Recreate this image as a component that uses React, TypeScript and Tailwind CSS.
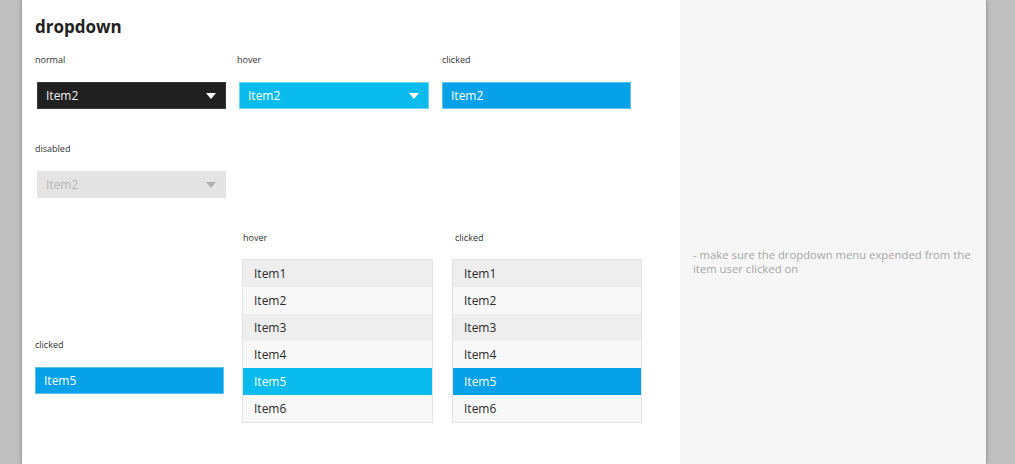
import React from 'react';

const font = { fontFamily: '"Open Sans", "Noto Sans", sans-serif' };

function Caret({ color }: { color: string }) {
  return (
    <svg width="10" height="6" viewBox="0 0 10 6" className="shrink-0">
      <path d="M0 0 L10 0 L5 6 Z" fill={color} />
    </svg>
  );
}

function Label({ children, className = '' }: { children: React.ReactNode; className?: string }) {
  return <div className={`text-[9px] leading-[12px] text-[#333] ${className}`}>{children}</div>;
}

const listItems = ['Item1', 'Item2', 'Item3', 'Item4', 'Item5', 'Item6'];

function ItemList({ active, width }: { active: string; width: string }) {
  return (
    <div className={`${width} border border-[#e3e3e3] flex flex-col`}>
      {listItems.map((item, idx) => {
        const isActive = item === 'Item5';
        const base = idx % 2 === 0 ? 'bg-[#eeeeee]' : 'bg-[#f8f8f8]';
        return (
          <div
            key={item}
            className={`h-[27px] pl-[11px] flex items-center text-[12px] ${
              isActive ? `${active} text-white` : `${base} text-[#2a2a2a]`
            }`}
          >
            {item}
          </div>
        );
      })}
    </div>
  );
}

export default function App() {
  return (
    <div className="w-[1015px] h-[464px] bg-[#bfbfbf] overflow-hidden" style={font}>
      <div className="ml-[22px] w-[964px] h-[464px] flex shadow-[0_0_4px_rgba(0,0,0,0.35)]">
        {/* Component board */}
        <div className="w-[658px] h-full bg-white pl-[13px] pt-[15px]">
          <h1 className="text-[17px] leading-[24px] font-bold text-[#222]">dropdown</h1>

          <div className="flex mt-[15px]">
            <div className="w-[202px]">
              <Label>normal</Label>
              <div className="ml-[2px] mt-[16px] w-[189px] h-[27px] bg-[#202020] border border-[#3a3a3a] pl-[8px] pr-[9px] flex items-center justify-between text-[12px] text-[#f2f2f2]">
                Item2
                <Caret color="#ffffff" />
              </div>
            </div>
            <div className="w-[205px]">
              <Label>hover</Label>
              <div className="ml-[2px] mt-[16px] w-[190px] h-[27px] bg-[#0abbee] border border-[#6fd4f3] pl-[8px] pr-[9px] flex items-center justify-between text-[12px] text-white">
                Item2
                <Caret color="#ffffff" />
              </div>
            </div>
            <div className="w-[190px]">
              <Label>clicked</Label>
              <div className="mt-[16px] w-[189px] h-[27px] bg-[#06a1e9] border border-[#5dc1ef] pl-[8px] flex items-center text-[12px] text-white">
                Item2
              </div>
            </div>
          </div>

          <div className="mt-[34px]">
            <Label>disabled</Label>
            <div className="ml-[2px] mt-[16px] w-[189px] h-[27px] bg-[#e4e4e4] pl-[9px] pr-[10px] flex items-center justify-between text-[12px] text-[#b5b5b5]">
              Item2
              <Caret color="#b0b0b0" />
            </div>
          </div>

          <div className="flex mt-[34px]">
            <div className="w-[207px] pt-[107px]">
              <Label>clicked</Label>
              <div className="mt-[16px] w-[189px] h-[27px] bg-[#06a1e9] border border-[#5dc1ef] pl-[8px] flex items-center text-[12px] text-white">
                Item5
              </div>
            </div>
            <div className="w-[210px]">
              <Label className="ml-[1px]">hover</Label>
              <div className="mt-[15px]">
                <ItemList active="bg-[#0abbee]" width="w-[191px]" />
              </div>
            </div>
            <div>
              <Label className="ml-[3px]">clicked</Label>
              <div className="mt-[15px]">
                <ItemList active="bg-[#06a1e9]" width="w-[190px]" />
              </div>
            </div>
          </div>
        </div>

        {/* Notes */}
        <div className="flex-1 h-full bg-[#f6f6f6] pl-[13px] pt-[248px]">
          <p className="text-[11.3px] leading-[14px] text-[#a6a6a6] whitespace-nowrap">
            - make sure the dropdown menu expended from the
            <br />
            item user clicked on
          </p>
        </div>
      </div>
    </div>
  );
}
